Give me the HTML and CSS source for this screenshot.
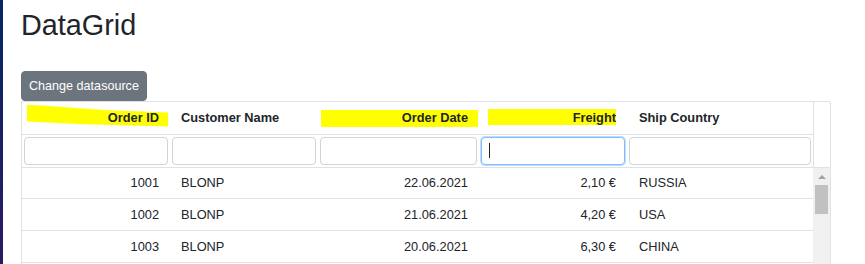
FILE: index.html
```html
<!DOCTYPE html>
<html lang="en">
<head>
    <meta charset="UTF-8">
    <meta name="viewport" content="width=device-width, initial-scale=1.0">
    <title>DataGrid</title>
    <link rel="stylesheet" href="styles.css">
</head>
<body>
    <div class="sidebar"></div>
    <div class="content">
        <h1>DataGrid</h1>

        <div class="toolbar">
            <button class="btn-secondary">Change datasource</button>
        </div>

        <div class="grid">
            <div class="grid-head">
                <div class="head-cols">
                    <div class="row head-row">
                        <div class="cell num"><span class="mark mark-id"></span><span class="label">Order ID</span></div>
                        <div class="cell"><span class="label">Customer Name</span></div>
                        <div class="cell num"><span class="mark mark-date"></span><span class="label">Order Date</span></div>
                        <div class="cell num"><span class="mark mark-freight"></span><span class="label">Freight</span></div>
                        <div class="cell"><span class="label">Ship Country</span></div>
                    </div>
                    <div class="row filter-row">
                        <div class="filter"><input type="text"></div>
                        <div class="filter"><input type="text"></div>
                        <div class="filter"><input type="text"></div>
                        <div class="filter focused"><input type="text"><span class="caret"></span></div>
                        <div class="filter"><input type="text"></div>
                    </div>
                </div>
                <div class="scroll-spacer"></div>
            </div>

            <div class="grid-body">
                <div class="rows">
                    <div class="row data-row">
                        <div class="cell num">1001</div>
                        <div class="cell">BLONP</div>
                        <div class="cell num">22.06.2021</div>
                        <div class="cell num">2,10 €</div>
                        <div class="cell">RUSSIA</div>
                    </div>
                    <div class="row data-row">
                        <div class="cell num">1002</div>
                        <div class="cell">BLONP</div>
                        <div class="cell num">21.06.2021</div>
                        <div class="cell num">4,20 €</div>
                        <div class="cell">USA</div>
                    </div>
                    <div class="row data-row">
                        <div class="cell num">1003</div>
                        <div class="cell">BLONP</div>
                        <div class="cell num">20.06.2021</div>
                        <div class="cell num">6,30 €</div>
                        <div class="cell">CHINA</div>
                    </div>
                </div>
                <div class="vscroll">
                    <span class="arrow-up"></span>
                    <span class="thumb"></span>
                </div>
            </div>
        </div>
    </div>
</body>
</html>
```

FILE: styles.css
```css
html, body {
    height: 100%;
}
body {
    margin: 0;
    display: flex;
    overflow: hidden;
    font-family: "Liberation Sans", Arial, sans-serif;
    font-size: 12.8px;
    color: #212529;
    background: #fff;
}
.sidebar {
    width: 3px;
    flex-shrink: 0;
    background-image: linear-gradient(180deg, rgb(5, 39, 103) 0%, #2a1a60 100%);
}
.content {
    flex: 1;
    padding: 8px 0 0 18px;
}
h1 {
    margin: 0 0 28px 0;
    font-size: 28.8px;
    font-weight: 400;
    line-height: 1.2;
    color: #212529;
}
.toolbar {
    display: flex;
}
.btn-secondary {
    height: 30px;
    padding: 0 7px;
    border: 1px solid #6c757d;
    border-radius: 4px;
    background-color: #6c757d;
    color: #fff;
    font-family: "Liberation Sans", Arial, sans-serif;
    font-size: 12.6px;
}
.grid {
    width: 810px;
    box-sizing: border-box;
    border: 1px solid #dee2e6;
    border-bottom: none;
    border-top-right-radius: 3px;
}
.grid-head {
    display: flex;
    border-bottom: 1px solid #dee2e6;
}
.scroll-spacer {
    width: 16px;
    border-left: 1px solid #dee2e6;
}
.row {
    display: grid;
    grid-template-columns: 148px 148px 161px 148px 186px;
}
.head-row {
    height: 32px;
    border-bottom: 1px solid #dee2e6;
    font-weight: 700;
}
.cell {
    position: relative;
    display: flex;
    align-items: center;
    padding: 0 11px;
    white-space: nowrap;
}
.cell.num {
    justify-content: flex-end;
}
.head-row .cell:last-child,
.data-row .cell:last-child {
    padding-left: 12px;
}
.label {
    position: relative;
}
.mark {
    position: absolute;
    background: #ffff00;
}
.mark-id {
    left: 5px;
    right: 2px;
    top: 3px;
    height: 22px;
    clip-path: polygon(0 0, 55% 25%, 100% 36%, 100% 100%, 40% 90%, 0 77%);
}
.mark-date {
    left: 3px;
    right: 1px;
    top: 8px;
    height: 17px;
}
.mark-freight {
    left: 9px;
    right: 11px;
    top: 7px;
    height: 16px;
}
.filter-row {
    height: 32px;
}
.filter {
    position: relative;
    padding: 2px 2px 0 2px;
}
.filter input {
    display: block;
    width: 100%;
    height: 28px;
    box-sizing: border-box;
    border: 1px solid #ced4da;
    border-radius: 4px;
    background: #fff;
    outline: none;
}
.filter.focused input {
    border-color: #80bdff;
    box-shadow: 0 0 0 1px rgba(0, 123, 255, 0.25);
}
.caret {
    position: absolute;
    left: 10px;
    top: 8px;
    width: 1px;
    height: 15px;
    background: #212529;
}
.grid-body {
    display: flex;
    height: 120px;
}
.rows {
    width: 791px;
}
.data-row {
    height: 30.67px;
    border-bottom: 1px solid #dee2e6;
}
.vscroll {
    width: 17px;
    background: #f0f0f0;
    display: flex;
    flex-direction: column;
    align-items: center;
}
.arrow-up {
    margin-top: 7px;
    width: 0;
    height: 0;
    border-left: 4px solid transparent;
    border-right: 4px solid transparent;
    border-bottom: 4px solid #a3a3a3;
}
.thumb {
    margin-top: 6px;
    width: 13px;
    height: 29px;
    background: #c1c1c1;
}
```
